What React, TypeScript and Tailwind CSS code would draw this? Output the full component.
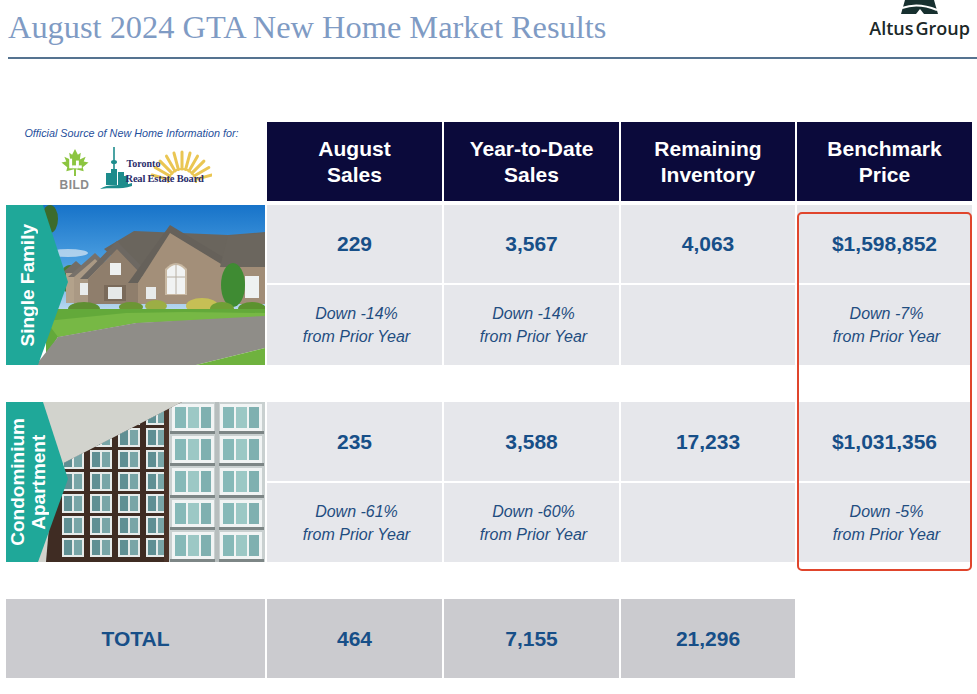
const cols = "grid grid-cols-[259px_175px_175px_174px_175px] gap-x-[2px]";

const headers = [
  ["August", "Sales"],
  ["Year-to-Date", "Sales"],
  ["Remaining", "Inventory"],
  ["Benchmark", "Price"],
];

const sections = [
  {
    label: ["Single Family"],
    photo: "house",
    rows: "grid-rows-[78px_80px]",
    values: ["229", "3,567", "4,063", "$1,598,852"],
    changes: ["Down -14%", "Down -14%", null, "Down -7%"],
  },
  {
    label: ["Condominium", "Apartment"],
    photo: "condo",
    rows: "grid-rows-[79px_79px]",
    values: ["235", "3,588", "17,233", "$1,031,356"],
    changes: ["Down -61%", "Down -60%", null, "Down -5%"],
  },
];

const AltusMark = () => (
  <svg width="37" height="14" viewBox="0 0 37 14">
    <polygon points="4,0 33,0 37,14 0,14" fill="#17302f" />
    <path d="M1,8 Q17,2 36,10" fill="none" stroke="#fff" strokeWidth="2" />
    <polygon points="15,14 23,14 19,9" fill="#fff" />
  </svg>
);

const BildLogo = () => (
  <div className="flex flex-col items-center">
    <svg width="30" height="29" viewBox="0 0 30 30">
      <polygon
        points="15,1 18,7 21,5 20,12 26,9 24,14 29,15 23,20 24,24 16,22 16,29 14,29 14,22 6,24 7,20 1,15 6,14 4,9 10,12 9,5 12,7"
        fill="#8cc540"
      />
      <rect x="9" y="11" width="3" height="10" fill="#fff" />
      <rect x="12" y="18" width="6" height="3" fill="#fff" />
      <rect x="16" y="13" width="3" height="8" fill="#fff" />
      <rect x="19" y="18" width="3" height="3" fill="#fff" />
    </svg>
    <span className="mt-[2px] text-[12px] font-bold leading-none tracking-[0.5px] text-[#8b8b8b]">BILD</span>
  </div>
);

const TrebLogo = () => {
  const rays = [];
  for (let i = 0; i <= 10; i++) {
    const a = ((195 + i * 15) * Math.PI) / 180;
    rays.push(
      <line
        key={i}
        x1={84 + Math.cos(a) * 14}
        y1={36 + Math.sin(a) * 14}
        x2={84 + Math.cos(a) * 31}
        y2={36 + Math.sin(a) * 31}
        stroke="#eac653"
        strokeWidth="3"
        strokeLinecap="round"
      />
    );
  }
  return (
    <div className="relative h-[44px] w-[114px]">
      <svg className="absolute inset-0" width="114" height="44" viewBox="0 0 114 44">
        {rays}
        <path d="M70,36 A14,14 0 0 1 98,36" fill="none" stroke="#eac653" strokeWidth="2" />
        <line x1="16" y1="0" x2="16" y2="34" stroke="#1d8c8c" strokeWidth="1.6" />
        <ellipse cx="16" cy="15" rx="3" ry="2" fill="#1d8c8c" />
        <rect x="8" y="26" width="5" height="12" fill="#1d8c8c" />
        <rect x="13" y="22" width="6" height="16" fill="#1d8c8c" />
        <rect x="20" y="25" width="6" height="13" fill="#1d8c8c" />
        <rect x="26" y="29" width="4" height="9" fill="#1d8c8c" />
        <path d="M2,42 C10,36 22,40 34,36 L34,39 C22,43 10,40 2,42 Z" fill="#1d8c8c" />
      </svg>
      <span className="absolute left-[29px] top-[12px] font-['Liberation_Serif',serif] text-[10px] font-bold leading-none text-[#2a2d6b]">
        Toronto
      </span>
      <span className="absolute left-[28px] top-[27px] whitespace-nowrap font-['Liberation_Serif',serif] text-[10.5px] font-bold leading-none tracking-[-0.2px] text-[#2a2d6b]">
        Real Estate Board
      </span>
    </div>
  );
};

const HousePhoto = () => (
  <svg viewBox="0 0 259 160" preserveAspectRatio="none" className="block h-full w-full">
    <defs>
      <linearGradient id="sky" x1="0" y1="0" x2="0" y2="1">
        <stop offset="0" stopColor="#1773c9" />
        <stop offset="0.55" stopColor="#4c9fe0" />
        <stop offset="1" stopColor="#b9d8ef" />
      </linearGradient>
    </defs>
    <rect width="259" height="105" fill="url(#sky)" />
    <ellipse cx="62" cy="48" rx="20" ry="4" fill="#dbe8f3" opacity="0.7" />
    <ellipse cx="44" cy="14" rx="8" ry="14" fill="#3c6b2c" />
    <ellipse cx="64" cy="74" rx="10" ry="14" fill="#4c7a33" />
    {/* back roof mass */}
    <polygon points="98,44 128,26 222,30 259,27 259,64 130,72" fill="#6a655d" />
    {/* far left wing */}
    <polygon points="56,68 70,56 84,68" fill="#726d66" />
    <rect x="60" y="68" width="22" height="30" fill="#b3a28b" />
    {/* left gable */}
    <polygon points="62,72 89,48 114,72" fill="#77716a" />
    <polygon points="68,72 89,54 108,72 108,99 68,99" fill="#aa9984" />
    <rect x="74" y="78" width="8" height="12" fill="#e9ecec" />
    <rect x="94" y="78" width="8" height="12" fill="#e9ecec" />
    {/* middle stone gable */}
    <polygon points="74,74 111,36 142,68 136,70 111,44 82,74" fill="#6d6862" />
    <polygon points="82,74 111,44 136,70 136,99 82,99" fill="#8f7e6c" />
    <rect x="104" y="58" width="11" height="12" fill="#edf0f0" />
    <rect x="98" y="80" width="22" height="16" fill="#7a6a5a" />
    <rect x="102" y="82" width="14" height="12" fill="#e6e9e8" />
    {/* main gable */}
    <polygon points="122,78 164,20 230,60 222,63 164,28 132,78" fill="#66615a" />
    <polygon points="132,78 164,28 220,62 220,99 132,99" fill="#a38f79" />
    <path d="M159,90 L159,64 Q170,52 181,64 L181,90 Z" fill="#c9b9a3" />
    <path d="M161,89 L161,65 Q170,55 179,65 L179,89 Z" fill="#f1f3f3" />
    <line x1="170" y1="58" x2="170" y2="89" stroke="#b8b0a4" strokeWidth="1" />
    <line x1="161" y1="72" x2="179" y2="72" stroke="#b8b0a4" strokeWidth="1" />
    <rect x="140" y="82" width="10" height="12" fill="#e8ebeb" />
    {/* right wing */}
    <polygon points="214,62 222,31 259,28 259,64" fill="#6b665e" />
    <rect x="218" y="62" width="41" height="37" fill="#a18d77" />
    <rect x="239" y="71" width="14" height="22" fill="#eef1f1" />
    {/* greenery */}
    <ellipse cx="227" cy="80" rx="12" ry="22" fill="#3f8b33" />
    <ellipse cx="196" cy="101" rx="16" ry="8" fill="#c6bf55" />
    <ellipse cx="216" cy="104" rx="12" ry="7" fill="#6f9f35" />
    <ellipse cx="246" cy="104" rx="14" ry="7" fill="#5c922f" />
    <ellipse cx="150" cy="101" rx="11" ry="6" fill="#9cae45" />
    <ellipse cx="125" cy="102" rx="12" ry="5" fill="#6c9634" />
    <ellipse cx="78" cy="104" rx="16" ry="7" fill="#5f8f32" />
    {/* lawn and drive */}
    <polygon points="40,104 259,104 259,112 130,118 52,132 40,150" fill="#63a93a" />
    <polygon points="40,116 120,108 180,107 259,108 259,112 130,118 52,132" fill="#77b845" />
    <polygon points="30,160 52,132 130,118 259,111 259,143 190,160" fill="#8f8d88" />
    <polygon points="190,160 259,143 259,160" fill="#6fb23e" />
  </svg>
);

const CondoPhoto = () => {
  const leftBays = [56, 84, 112, 140];
  const rowsY = [4, 26, 48, 70, 92, 114, 136];
  const rightBays = [166, 214];
  const rightRows = [2, 34, 66, 98, 130];
  return (
    <svg viewBox="0 0 259 160" preserveAspectRatio="none" className="block h-full w-full">
      <defs>
        <clipPath id="bld">
          <polygon points="48,66 176,0 259,0 259,160 40,160" />
        </clipPath>
      </defs>
      <rect width="259" height="160" fill="#d2d3cd" />
      <g clipPath="url(#bld)">
        <rect width="259" height="160" fill="#3f2c23" />
        {leftBays.map((x) =>
          rowsY.map((y) => (
            <g key={`${x}-${y}`}>
              <rect x={x} y={y} width="22" height="19" fill="#e6ebea" />
              <rect x={x + 2} y={y + 2} width="8" height="15" fill="#5f8f93" />
              <rect x={x + 12} y={y + 2} width="8" height="15" fill="#78a5a7" />
            </g>
          ))
        )}
        <rect x="162" y="0" width="97" height="160" fill="#c9d0d0" />
        {rightBays.map((x) =>
          rightRows.map((y) => (
            <g key={`${x}-${y}`}>
              <rect x={x} y={y} width="42" height="27" fill="#f1f4f4" />
              <rect x={x + 3} y={y + 3} width="11" height="21" fill="#86b9b8" />
              <rect x={x + 16} y={y + 3} width="11" height="21" fill="#9cc8c5" />
              <rect x={x + 29} y={y + 3} width="10" height="21" fill="#7fb0b0" />
              <rect x={x - 2} y={y + 27} width="46" height="3" fill="#7d8686" />
            </g>
          ))
        )}
        <rect x="158" y="0" width="5" height="160" fill="#4a3328" />
        <rect x="209" y="0" width="4" height="160" fill="#b7bebe" />
      </g>
    </svg>
  );
};

const PhotoCell = ({ photo, label }: { photo: string; label: string[] }) => (
  <div className="relative row-span-2 overflow-hidden">
    {photo === "house" ? <HousePhoto /> : <CondoPhoto />}
    <svg className="absolute inset-0 h-full w-full" viewBox="0 0 259 160" preserveAspectRatio="none">
      <polygon points="0,0 37,0 62,77 32,160 0,160" fill="#1fa899" />
    </svg>
    <div className="absolute inset-y-0 left-0 flex w-[43px] items-center justify-center">
      <span className="rotate-180 text-center text-[19px] font-bold leading-[21px] text-white [writing-mode:vertical-rl]">
        {label.map((l) => (
          <span key={l} className="block">
            {l}
          </span>
        ))}
      </span>
    </div>
  </div>
);

export default function App() {
  return (
    <div className="relative h-[694px] w-[977px] overflow-hidden bg-white font-['Liberation_Sans',Arial,sans-serif]">
      <div className="ml-[8px] flex h-[59px] items-start justify-between border-b-2 border-[#557390]">
        <h1 className="pt-[11px] font-['Liberation_Serif','Times_New_Roman',serif] text-[32.4px] leading-[32px] text-[#7f9bc4]">
          August 2024 GTA New Home Market Results
        </h1>
        <div className="mr-[7px] flex flex-col items-center">
          <AltusMark />
          <span className="mt-[3px] flex font-['Open_Sans',sans-serif] text-[18px] font-semibold leading-[22px] text-[#1b2828]">
            <span>Altus</span>
            <span className="ml-[2px]">Group</span>
          </span>
        </div>
      </div>

      <div className="mt-[63px] px-[6px]">
        <div className={`${cols} h-[79px]`}>
          <div className="flex flex-col items-center pt-[5px]">
            <p className="pr-[8px] text-[10.8px] italic leading-[12px] text-[#1f4f9c]">
              Official Source of New Home Information for:
            </p>
            <div className="mt-[8px] flex items-end gap-[8px]">
              <BildLogo />
              <TrebLogo />
            </div>
          </div>
          {headers.map((h) => (
            <div
              key={h[0]}
              className="flex flex-col items-center justify-center bg-[#0b0a3b] text-[21px] font-bold leading-[26px] text-white"
            >
              <span>{h[0]}</span>
              <span>{h[1]}</span>
            </div>
          ))}
        </div>

        {sections.map((s, si) => (
          <div
            key={s.photo}
            className={`${cols} ${s.rows} gap-y-[2px] ${si === 0 ? "mt-[4px]" : "mt-[37px]"}`}
          >
            <PhotoCell photo={s.photo} label={s.label} />
            {s.values.map((v) => (
              <div
                key={v}
                className="flex items-center justify-center bg-[#e6e7eb] text-[21px] font-bold text-[#174f88]"
              >
                {v}
              </div>
            ))}
            {s.changes.map((c, i) => (
              <div
                key={i}
                className="flex flex-col items-center justify-center bg-[#e6e7eb] pl-[4px] text-[16px] italic leading-[23px] text-[#1f4d80]"
              >
                {c && (
                  <>
                    <span>{c}</span>
                    <span>from Prior Year</span>
                  </>
                )}
              </div>
            ))}
          </div>
        ))}

        <div className={`${cols} mt-[37px] h-[79px]`}>
          {["TOTAL", "464", "7,155", "21,296"].map((t) => (
            <div
              key={t}
              className="flex items-center justify-center bg-[#cbcbcf] text-[21px] font-bold text-[#174f88]"
            >
              {t}
            </div>
          ))}
          <div />
        </div>
      </div>

      <div className="absolute left-[797px] top-[212px] h-[359px] w-[175px] rounded-[5px] border-2 border-[#e0452c]" />
    </div>
  );
}
